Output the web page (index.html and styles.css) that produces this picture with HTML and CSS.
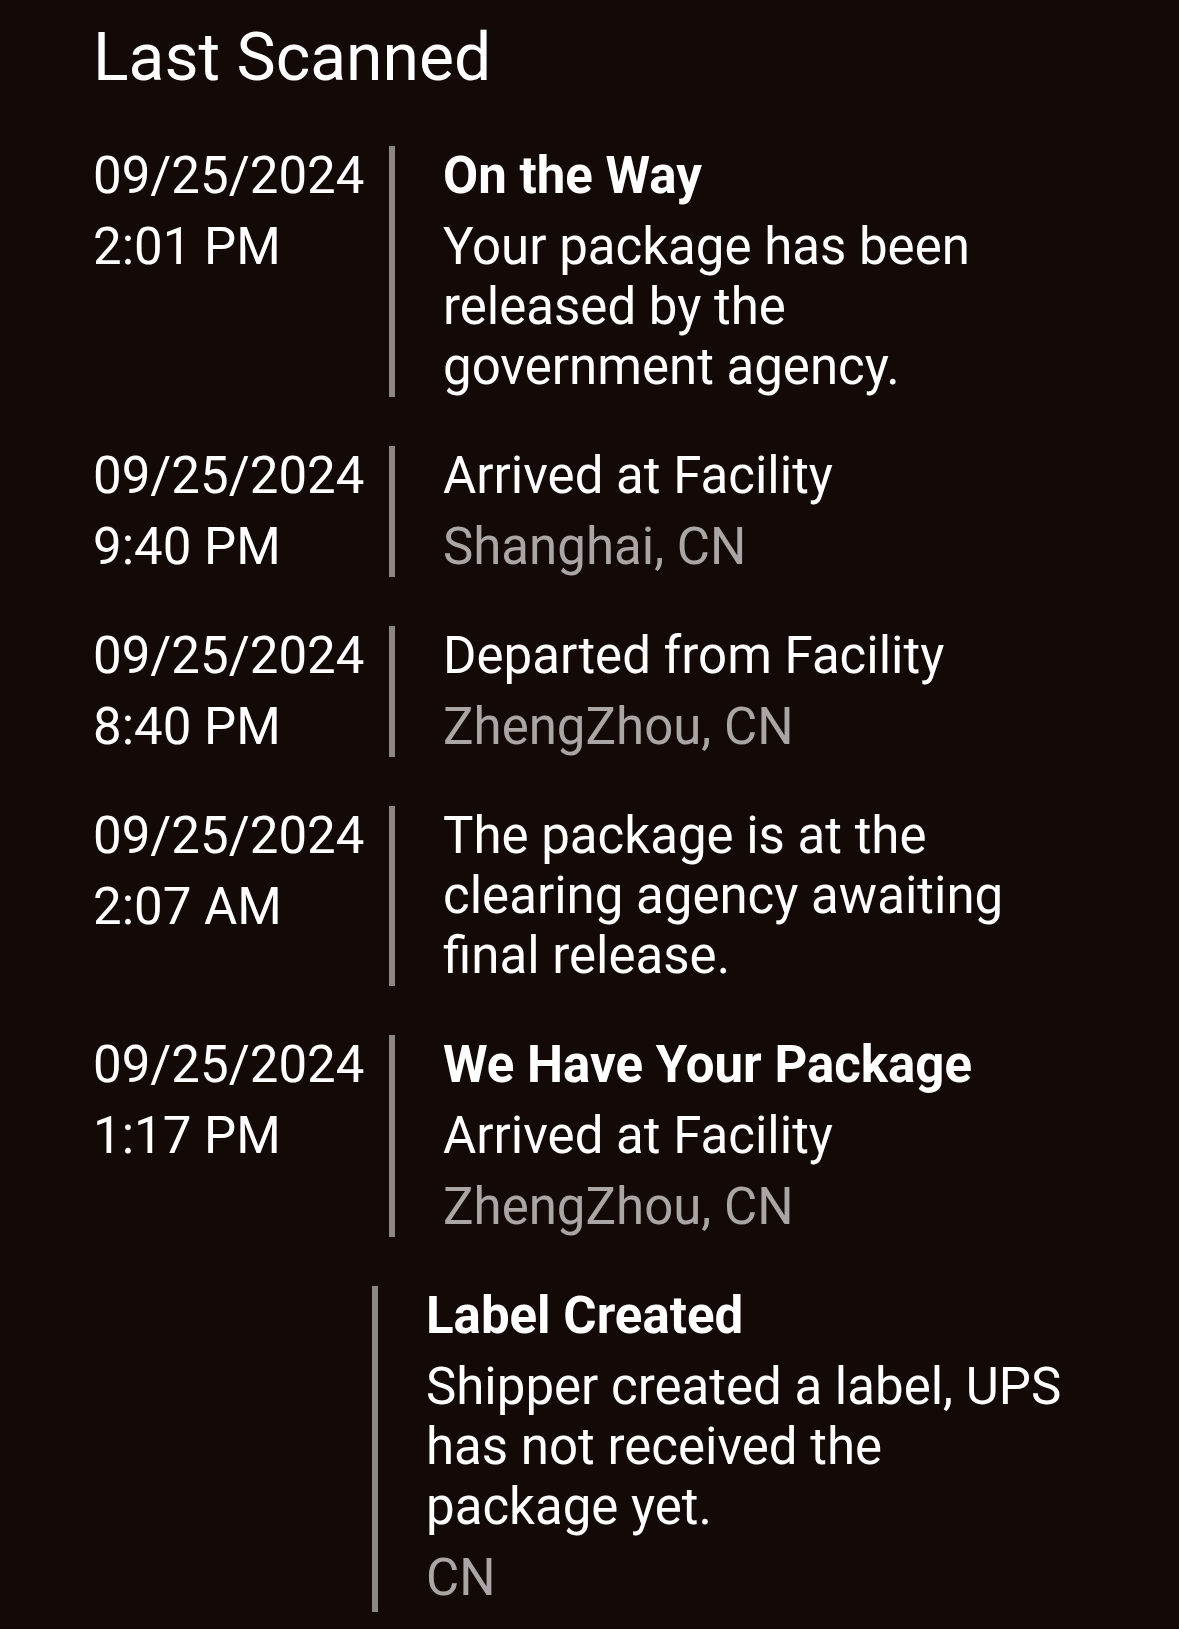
FILE: index.html
```html
<!DOCTYPE html>
<html lang="en">
  <head>
    <meta charset="utf-8">
    <title>Last Scanned</title>
    <link rel="stylesheet" href="styles.css">
  </head>
  <body>
    <div id="tracking">
      <h1 class="heading">Last Scanned</h1>
      <div class="stop">
        <div class="when">
          <p>09/25/2024</p>
          <p>2:01 PM</p>
        </div>
        <div class="what">
          <p class="status">On the Way</p>
          <p>Your package has been released by the government agency.</p>
        </div>
      </div>
      <div class="stop">
        <div class="when">
          <p>09/25/2024</p>
          <p>9:40 PM</p>
        </div>
        <div class="what">
          <p>Arrived at Facility</p>
          <p class="place">Shanghai, CN</p>
        </div>
      </div>
      <div class="stop">
        <div class="when">
          <p>09/25/2024</p>
          <p>8:40 PM</p>
        </div>
        <div class="what">
          <p>Departed from Facility</p>
          <p class="place">ZhengZhou, CN</p>
        </div>
      </div>
      <div class="stop">
        <div class="when">
          <p>09/25/2024</p>
          <p>2:07 AM</p>
        </div>
        <div class="what">
          <p>The package is at the clearing agency awaiting final release.</p>
        </div>
      </div>
      <div class="stop">
        <div class="when">
          <p>09/25/2024</p>
          <p>1:17 PM</p>
        </div>
        <div class="what">
          <p class="status">We Have Your Package</p>
          <p>Arrived at Facility</p>
          <p class="place">ZhengZhou, CN</p>
        </div>
      </div>
      <div class="stop no-date">
        <div class="when"></div>
        <div class="what">
          <p class="status">Label Created</p>
          <p>Shipper created a label, UPS has not received the package yet.</p>
          <p class="place">CN</p>
        </div>
      </div>
    </div>
  </body>
</html>
```

FILE: styles.css
```css
body {
  margin: 0;
  background: #130a08;
  color: #ffffff;
  font-family: Roboto, "Noto Sans", sans-serif;
}
#tracking {
  display: flex;
  flex-direction: column;
  gap: 49px;
  padding: 19px 112px 20px 93px;
}
.heading {
  margin: 0;
  font-size: 66px;
  font-weight: 400;
  line-height: 78px;
}
.stop {
  display: flex;
  align-items: flex-start;
}
.stop p {
  margin: 0;
  font-size: 51px;
  line-height: 60px;
}
.when {
  flex: none;
  width: 296px;
  display: flex;
  flex-direction: column;
  gap: 11px;
}
.no-date .when {
  width: 279px;
}
.what {
  flex: 1;
  display: flex;
  flex-direction: column;
  gap: 11px;
  border-left: 6px solid #8c8787;
  padding-left: 48px;
}
.no-date .what {
  padding-bottom: 4px;
}
.status {
  font-weight: 700;
}
.place {
  color: #aaa6a5;
}
```
